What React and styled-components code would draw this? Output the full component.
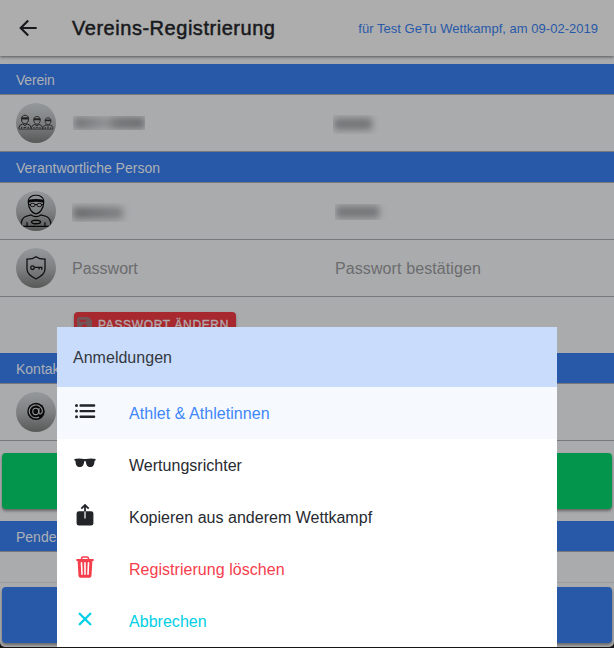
import React from "react";
import styled, { createGlobalStyle } from "styled-components";

const Global = createGlobalStyle`
  * { box-sizing: border-box; }
  body { margin: 0; background: #161616; overflow: hidden; font-family: "Liberation Sans", Arial, sans-serif; }
  svg { display: block; flex: none; }
`;

const Screen = styled.div`
  position: relative;
  display: flex;
  flex-direction: column;
  width: 614px;
  height: 647px;
  overflow: hidden;
  background: #aaabad;
  border-radius: 0 0 5px 5px;
`;

const Toolbar = styled.header`
  display: flex;
  align-items: center;
  flex: none;
  height: 56px;
  padding: 0 16px 0 18px;
  background: #adadad;
  box-shadow: 0 1px 3px rgba(0, 0, 0, 0.5);
`;

const Title = styled.h1`
  flex: 1;
  margin: 0 0 0 34px;
  font-size: 20px;
  line-height: 24px;
  font-weight: 400;
  letter-spacing: 0.53px;
  color: #18191c;
  -webkit-text-stroke: 0.5px #18191c;
  white-space: nowrap;
`;

const Subtitle = styled.span`
  font-size: 13px;
  letter-spacing: 0.02px;
  color: #2859a8;
  padding-top: 1px;
  white-space: nowrap;
`;

const Content = styled.main`
  display: flex;
  flex-direction: column;
  padding-top: 8px;
`;

const Divider = styled.h2`
  display: flex;
  align-items: center;
  flex: none;
  height: 31px;
  margin: 0;
  padding: 2px 16px 0;
  background: #2859a8;
  border-bottom: 1px solid #77787c;
  color: #adb0b5;
  font-size: 14px;
  font-weight: 400;
  letter-spacing: ${(p) => p.$tracking || "0"};
`;

const Row = styled.div`
  display: grid;
  grid-template-columns: 56px 263px 1fr;
  align-items: center;
  flex: none;
  height: 57px;
  padding-left: 16px;
  border-bottom: 1px solid #77787c;
`;

const Avatar = styled.div`
  width: 40px;
  height: 40px;
  overflow: hidden;
  border-radius: 50%;
  background: linear-gradient(#95999b, #7e8182 50%, #585858);
`;

const Placeholder = styled.span`
  padding-top: 2px;
  font-size: 16px;
  color: #6b6c6e;
  letter-spacing: ${(p) => p.$tracking || "0"};
`;

const Redacted = styled.div`
  width: ${(p) => p.$w}px;
  height: ${(p) => p.$h}px;
  margin: ${(p) => p.$m || "0"};
  overflow: hidden;
  &::before {
    content: "";
    display: block;
    height: 12px;
    margin: ${(p) => p.$top || 2}px ${(p) => p.$inset || 0}px 0 1px;
    background: ${(p) => p.$fill};
    filter: blur(3.5px);
  }
`;

const ButtonRow = styled.div`
  flex: none;
  height: 56px;
  padding: 15px 0 0 74px;
`;

const PasswordButton = styled.button`
  display: flex;
  align-items: center;
  width: 162px;
  height: 28px;
  padding: 0 0 3px 3px;
  border: 0;
  border-radius: 4px;
  background: #a7282f;
  box-shadow: 0 2px 3px rgba(0, 0, 0, 0.3);
  color: #b1aaad;
  font: 12px "Liberation Sans", Arial, sans-serif;
  letter-spacing: 0.64px;
  gap: 6px;
  white-space: nowrap;
  -webkit-text-stroke: 0.35px #b1aaad;
`;

const WideButton = styled.button`
  flex: none;
  height: 56px;
  margin: ${(p) => p.$margin};
  border: 0;
  border-radius: 4px;
  background: ${(p) => p.$color};
  box-shadow: 0 2px 3px rgba(0, 0, 0, 0.4);
`;

const EmptyRow = styled.div`
  flex: none;
  height: 31px;
  border-bottom: 1px solid #9b9c9e;
`;

const Sheet = styled.section`
  position: absolute;
  left: 57px;
  bottom: 0;
  width: 500px;
  height: 320px;
  background: #fff;
`;

const SheetTitle = styled.h3`
  display: flex;
  align-items: center;
  height: 60px;
  margin: 0;
  padding: 2px 16px 0;
  background: #c9dcfc;
  color: #33383f;
  font-size: 16px;
  font-weight: 400;
  letter-spacing: 0.02px;
`;

const Action = styled.button`
  display: flex;
  align-items: center;
  width: 100%;
  height: 52px;
  padding: 0 16px;
  border: 0;
  background: ${(p) => (p.$active ? "#f6faff" : "#fff")};
  color: ${(p) => p.$color};
  font: 16px "Liberation Sans", Arial, sans-serif;
  letter-spacing: ${(p) => p.$tracking || "0"};
  gap: 32px;

  svg { margin-bottom: 4px; }
  span { padding-top: 1px; }
`;

const BackIcon = () => (
  <svg width="20" height="20" viewBox="0 0 20 20" fill="none" stroke="#18191c" strokeWidth="2.1">
    <path d="M18.7 10H3M10.2 2.4 2.7 10l7.5 7.6" />
  </svg>
);

const TeamIcon = () => (
  <svg width="40" height="40" viewBox="0 0 40 40" fill="none" stroke="#222" strokeWidth="0.9">
    {[[9, 1.1], [21, 1], [32, 0.9]].map(([x, s]) => (
      <g key={x} transform={`translate(${x} 26) scale(${s})`}>
        <path d="M-3.2-8.500v-1C-3.200-13.500 3.200-13.500 3.200-9.500v1C3.200-6.500 1.500-4.700 0-4.700s-3.200-1.800-3.200-3.800Z" />
        <path d="M-3.300-9.700h6.600" strokeWidth="1.900" />
        <path d="M-5.400 0v-1.700Q-5-4-2-4.600L0-3l2-1.600Q5-4 5.400-1.700V0M-3 0v-2M3 0v-2M-1.300-1.200h2.600" />
      </g>
    ))}
    <path d="M3 26.200h34" stroke="#3a3a3a" />
  </svg>
);

const PersonIcon = () => (
  <svg width="40" height="40" viewBox="0 0 40 40" fill="none" stroke="#080808" strokeWidth="1.200">
    <path d="M12.300 11.500v-1.700C12.300 2.400 27.700 2.400 27.700 9.800v1.700c0 5.500-4 11.300-7.700 11.300s-7.700-5.800-7.700-11.300Z" />
    <path d="M12.200 10.300q7.800-2 15.600 0" strokeWidth="2.800" />
    <path d="M12.500 13.500h2m11 0h2M18.800 13.500h2.400" />
    <ellipse cx="16.700" cy="14" rx="2.400" ry="1.700" strokeWidth=".9" />
    <ellipse cx="23.300" cy="14" rx="2.400" ry="1.700" strokeWidth=".9" />
    <path d="M5 35.300q0-8 4.500-9.800l5.500-1.600q5 3.400 10 0l5.500 1.600Q35 27.500 35 35.300M4.500 35.300h31M11 35.300v-4M29 35.300v-4" />
    <ellipse cx="20" cy="31" rx="4.500" ry="1.800" strokeWidth="1.400" />
  </svg>
);

const ShieldIcon = () => (
  <svg width="40" height="40" viewBox="0 0 40 40" fill="none" stroke="#101010" strokeWidth="1.300">
    <path d="M20 8.700c-2.500 2-5.800 2.600-9 2.500V21c0 4.500 4 7.500 9 10 5-2.500 9-5.500 9-10v-9.800c-3.200.1-6.500-.5-9-2.500Z" />
    <circle cx="16.500" cy="19.700" r="1.800" />
    <path d="M18.300 19.400h7.500v2.300M23.100 19.400v2" />
  </svg>
);

const MailIcon = () => (
  <svg width="40" height="40" viewBox="0 0 40 40" fill="none">
    <circle cx="20" cy="19.400" r="8.700" fill="#090909" />
    <g stroke="#929496" strokeWidth="1.100">
      <ellipse cx="19.700" cy="19.400" rx="2.900" ry="3.200" />
      <path d="M23 15.900v4.800c.3 2.300 3.400 1.200 3.400-1.900A6.600 6.400 0 1 0 23 25" />
    </g>
  </svg>
);

const SaveIcon = () => (
  <svg width="15" height="20" viewBox="0 0 15 20" fill="#735557">
    <path fillRule="evenodd" d="M2 2h9.500L15 5.500V18a2 2 0 0 1-2 2H2a2 2 0 0 1-2-2V4a2 2 0 0 1 2-2Zm.5 2.700V6.700H9V4.700ZM7.500 9a2.500 2.500 0 1 0 0 5 2.500 2.500 0 0 0 0-5Z" />
  </svg>
);

const ListIcon = () => (
  <svg width="24" height="24" viewBox="0 0 24 24" fill="#222428">
    {[6.5, 12.1, 17.700].map((y) => (
      <g key={y}>
        <circle cx="3.500" cy={y} r="1.500" />
        <rect x="6.500" y={y - 1.200} width="15.700" height="2.400" rx=".8" />
      </g>
    ))}
  </svg>
);

const GlassesIcon = () => (
  <svg width="24" height="24" viewBox="0 0 24 24" fill="#222428">
    <path d="M1.300 8q5-1.100 9.700.1h2Q17.700 6.900 22.700 8l-.3 1.400-.9.500c-.2 4.200-1.200 6-4.400 6-3.300 0-3.700-2.500-4.400-5.500-.2-.8-1.200-.8-1.400 0-.7 3-1.100 5.500-4.400 5.500-3.200 0-4.200-1.800-4.400-6l-.9-.5Z" />
  </svg>
);

const ShareIcon = () => (
  <svg width="24" height="24" viewBox="0 0 24 24" fill="none">
    <rect x="3.600" y="8.300" width="16.800" height="14.200" rx="2.300" fill="#222428" />
    <path d="M12 8v7.500" stroke="#d5d5d6" strokeWidth="1.500" />
    <path d="M12 8.500V2.500M8.300 5.700 12 2.100l3.700 3.600" stroke="#222428" strokeWidth="1.800" />
  </svg>
);

const TrashIcon = () => (
  <svg width="24" height="24" viewBox="0 0 24 24" fill="none" stroke="#f53d4c">
    <path d="M8.600 4.500V3.200q0-1.300 1.300-1.300h4.200q1.300 0 1.300 1.300v1.300" strokeWidth="1.500" />
    <path d="M3.400 5h17.200" strokeWidth="2" />
    <path d="M4.600 5h14.800l-.9 15.700q-.1 2-2 2h-9q-1.900 0-2-2Z" fill="#f53d4c" stroke="none" />
    <path d="m8.500 7.800.5 11.400M15.500 7.800 15 19.200M12 7.800v11.400" stroke="#fff" strokeWidth="1.600" strokeLinecap="round" />
  </svg>
);

const CloseIcon = () => (
  <svg width="24" height="24" viewBox="0 0 24 24" fill="none" stroke="#00cfe5" strokeWidth="2.300" strokeLinecap="round">
    <path d="m6.700 6.700 10.600 10.600M17.300 6.700 6.700 17.300" />
  </svg>
);

const actions = [
  { label: "Athlet & Athletinnen", Icon: ListIcon, color: "#3f86fb", active: true, tracking: "0.05px" },
  { label: "Wertungsrichter", Icon: GlassesIcon, color: "#272a30", tracking: "0.02px" },
  { label: "Kopieren aus anderem Wettkampf", Icon: ShareIcon, color: "#272a30", tracking: "0.02px" },
  { label: "Registrierung löschen", Icon: TrashIcon, color: "#f53d4c", tracking: "0.04px" },
  { label: "Abbrechen", Icon: CloseIcon, color: "#00cfe5", tracking: "0.03px" },
];

export default function App() {
  return (
    <>
      <Global />
      <Screen>
        <Toolbar>
          <BackIcon />
          <Title>Vereins-Registrierung</Title>
          <Subtitle>für Test GeTu Wettkampf, am 09-02-2019</Subtitle>
        </Toolbar>
        <Content>
          <Divider $tracking="-0.2px">Verein</Divider>
          <Row>
            <Avatar><TeamIcon /></Avatar>
            <Redacted $w={72} $h={14} $m="0 0 0 1px" $top={1} $fill="linear-gradient(90deg,#707173,#88898b 35%,#919294 45%,#737476 60%,#6c6d6f)" />
            <Redacted $w={46} $h={19} $m="2px 0 0 -2px" $inset={7} $top={3} $fill="#747577" />
          </Row>
          <Divider>Verantwortliche Person</Divider>
          <Row>
            <Avatar><PersonIcon /></Avatar>
            <Redacted $w={60} $h={19} $m="2px 0 0 0" $inset={9} $top={4} $fill="linear-gradient(90deg,#68696b,#808183)" />
            <Redacted $w={52} $h={16} $m="2px 0 0 0" $inset={8} $fill="#747577" />
          </Row>
          <Row>
            <Avatar><ShieldIcon /></Avatar>
            <Placeholder>Passwort</Placeholder>
            <Placeholder $tracking="0.1px">Passwort bestätigen</Placeholder>
          </Row>
          <ButtonRow>
            <PasswordButton><SaveIcon />PASSWORT ÄNDERN</PasswordButton>
          </ButtonRow>
          <Divider>Kontakt</Divider>
          <Row>
            <Avatar><MailIcon /></Avatar>
          </Row>
          <WideButton $color="#03954b" $margin="12px 2px" />
          <Divider>Pendente</Divider>
          <EmptyRow />
          <WideButton $color="#2859a8" $margin="4px 2px 0" />
        </Content>
        <Sheet>
          <SheetTitle>Anmeldungen</SheetTitle>
          {actions.map(({ label, Icon, color, active, tracking }) => (
            <Action key={label} $color={color} $active={active} $tracking={tracking}>
              <Icon />
              <span>{label}</span>
            </Action>
          ))}
        </Sheet>
      </Screen>
    </>
  );
}
